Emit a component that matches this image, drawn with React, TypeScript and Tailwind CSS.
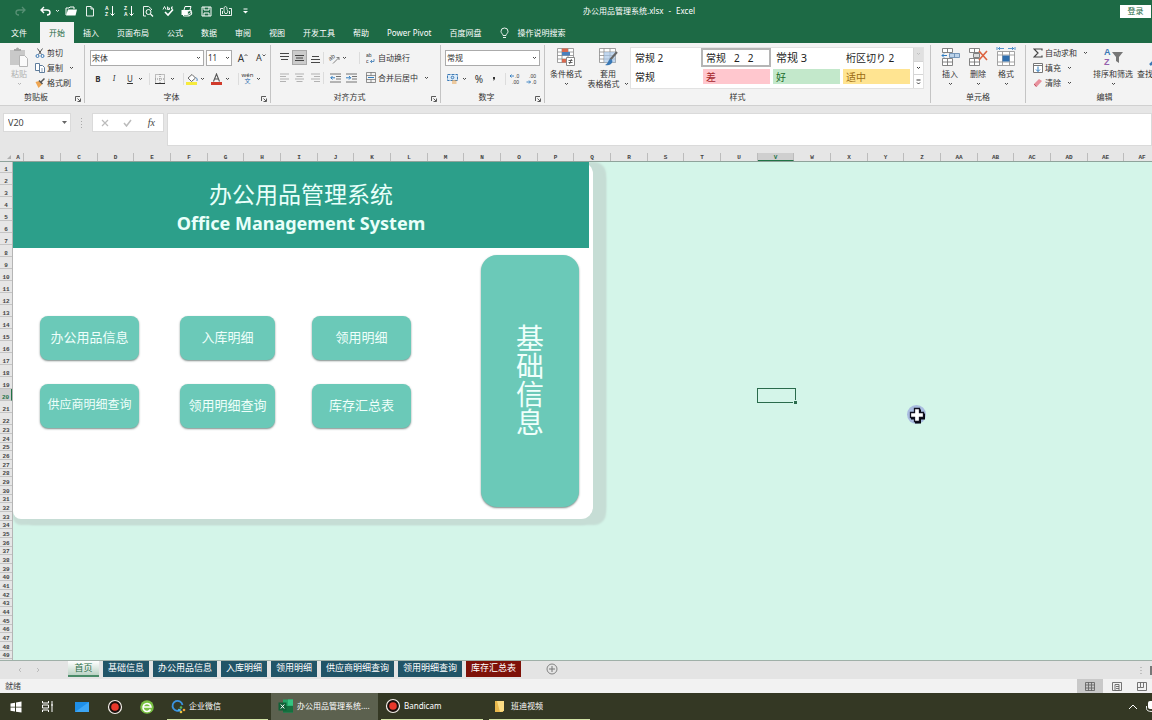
import type { ReactNode } from "react";

const SHEET_TABS = [
  "基础信息",
  "办公用品信息",
  "入库明细",
  "领用明细",
  "供应商明细查询",
  "领用明细查询",
];

const MENU_TABS = [
  "插入",
  "页面布局",
  "公式",
  "数据",
  "审阅",
  "视图",
  "开发工具",
  "帮助",
  "Power Pivot",
  "百度网盘",
];

const COLUMNS = [
  ..."BCDEFGHIJKLMNOPQRSTUVWXYZ".split(""),
  "AA",
  "AB",
  "AC",
  "AD",
  "AE",
  "AF",
];

const ROWS = Array.from({ length: 49 }, (_, i) => i + 1);

const rowHeight = (row: number) => {
  if (row === 1) return "h-[11px]";
  if (row <= 22) return "h-[12px]";
  return row % 3 === 1 ? "h-[8px]" : "h-[9px]";
};

type IconProps = {
  w?: number;
  h?: number;
  className?: string;
  children: ReactNode;
};

const Icon = ({ w = 12, h = 12, className = "", children }: IconProps) => (
  <svg
    width={w}
    height={h}
    viewBox={`0 0 ${w} ${h}`}
    fill="none"
    stroke="currentColor"
    className={`shrink-0 font-['Liberation_Sans',sans-serif] ${className}`}
    aria-hidden="true"
  >
    {children}
  </svg>
);

const Chevron = ({ className = "" }: { className?: string }) => (
  <Icon w={5} h={4} className={className}>
    <path d="M1 1l1.500 1.500L4 1" strokeWidth="0.9" />
  </Icon>
);

const Divider = () => <div className="h-3 w-px bg-[#dcdcdc]" />;

type ToolProps = { label: string; className: string; children: ReactNode };

const Tool = ({ label, className, children }: ToolProps) => (
  <button
    aria-label={label}
    className={`flex h-[15px] shrink-0 items-center justify-center ${className}`}
  >
    {children}
  </button>
);

type GroupProps = {
  title: string;
  className: string;
  launcher?: boolean;
  children: ReactNode;
};

const Group = ({ title, className, launcher, children }: GroupProps) => (
  <section
    className={`flex shrink-0 flex-col justify-between border-r border-[#c4c4c4] ${className}`}
  >
    <div className="flex h-[46px]">{children}</div>
    <div className="flex h-3 items-center">
      <span className="flex-1 text-center leading-3">{title}</span>
      {launcher && (
        <button aria-label={`${title}设置`} className="flex w-3 justify-center pt-1">
          <Icon w={6} h={6}>
            <path d="M0.500 5V0.500H5M2.500 2.500L5 5M5.500 2.500v3h-3" strokeWidth="0.8" />
          </Icon>
        </button>
      )}
    </div>
  </section>
);

const BigButton = ({
  icon,
  lines,
  className,
}: {
  icon: ReactNode;
  lines: string[];
  className: string;
}) => (
  <button
    className={`flex shrink-0 flex-col items-center whitespace-nowrap pt-[2px] ${className}`}
  >
    {icon}
    <span className="mt-[2px] leading-[10px]">{lines[0]}</span>
    <span className="flex h-[10px] items-center gap-1 leading-[10px]">
      {lines[1]}
      <Chevron />
    </span>
  </button>
);

const SmallButton = ({
  icon,
  label,
  arrow,
}: {
  icon: ReactNode;
  label: string;
  arrow?: boolean;
}) => (
  <button className="flex h-[15px] items-center gap-[2px] whitespace-nowrap">
    <span className="flex w-[10px] justify-center">{icon}</span>
    <span>{label}</span>
    {arrow && <Chevron className="ml-1" />}
  </button>
);

const Lines = ({ d }: { d: string }) => (
  <Icon w={9} h={12}>
    <path d={d} strokeWidth="0.9" />
  </Icon>
);

const TableGlyph = ({ children }: { children?: ReactNode }) => (
  <Icon w={20} h={20}>
    <path
      d="M1.500 1.500h16v14h-16zM1.500 5h16M1.500 8.500h16M1.500 12h16M6 1.500v14M12 1.500v14"
      stroke="#8a8a8a"
      strokeWidth="0.8"
      fill="#fff"
    />
    {children}
  </Icon>
);

const RecordGlyph = () => (
  <Icon w={16} h={16}>
    <circle cx="8" cy="8" r="6.500" fill="#1c0f0c" stroke="#f4f0ea" strokeWidth="1.200" />
    <circle cx="8" cy="8" r="3.800" fill="#e8382b" stroke="none" />
  </Icon>
);

const SortGlyph = ({ top, bottom }: { top: string; bottom: string }) => (
  <Icon>
    <text x="1" y="5" fontSize="5" fontWeight="700" fill="currentColor" stroke="none">{top}</text>
    <text x="1" y="11" fontSize="5" fontWeight="700" fill="currentColor" stroke="none">{bottom}</text>
    <path d="M8.500 1v9.500M6.500 8.500l2 2 2-2" />
  </Icon>
);

const TitleBar = () => (
  <header className="grid h-[22px] grid-cols-[1fr_auto_1fr] items-center">
    <div className="flex h-full items-center">
      <Tool label="重做" className="ml-3 w-4 opacity-25">
        <Icon w={12} h={10}>
          <path d="M8 1l3 3-3 3M11 4H5a3 2.500 0 0 0 0 5" strokeWidth="1.300" />
        </Icon>
      </Tool>
      <Tool label="撤消" className="ml-[11px] w-[22px] gap-[3px]">
        <Icon w={12} h={10}>
          <path d="M4 1L1 4l3 3M1 4h6a3 2.500 0 0 1 0 5" strokeWidth="1.400" />
        </Icon>
        <Chevron />
      </Tool>
      <div className="flex w-[194px]">
        <Tool label="打开" className="flex-1">
          <Icon>
            <path d="M1 10V3h3l1-1h4v2" />
            <path d="M1 10.500L3 4.500H12l-1.500 6z" fill="currentColor" stroke="none" />
          </Icon>
        </Tool>
        <Tool label="新建" className="flex-1">
          <Icon w={10}>
            <path d="M1.500 1.500h4.500l2.500 2.500v7h-7zM6 1.500V4h2.500" strokeWidth="0.9" />
          </Icon>
        </Tool>
        <Tool label="升序排序" className="flex-1">
          <SortGlyph top="A" bottom="Z" />
        </Tool>
        <Tool label="降序排序" className="flex-1">
          <SortGlyph top="Z" bottom="A" />
        </Tool>
        <Tool label="打印预览" className="flex-1">
          <Icon>
            <path d="M4 11H1.500V1.500h5l3 2.500v1" strokeWidth="0.9" />
            <circle cx="6.500" cy="7" r="2.500" />
            <path d="M8.500 9l2.500 2.500" strokeWidth="1.300" />
          </Icon>
        </Tool>
        <Tool label="拼写检查" className="flex-1">
          <Icon>
            <path d="M1 4.500L2.500 1.500 4 4.500M5.500 1.500v3h2v-1.500h-2M11 2H9.500v2H11" strokeWidth="0.9" />
            <path d="M3 7l3 3 5-5.500" strokeWidth="1.600" />
          </Icon>
        </Tool>
        <Tool label="快速打印" className="flex-1">
          <Icon>
            <path d="M0.500 5h10v5H0.500z" fill="currentColor" stroke="none" />
            <path d="M3 5l1-3.500h6L9 5M2.500 8h6v3h-6z" />
            <circle cx="8.500" cy="8" r="2.300" fill="#1d6a45" />
            <path d="M7.500 8l1 1 1.500-2" strokeWidth="0.8" />
          </Icon>
        </Tool>
        <Tool label="保存" className="flex-1">
          <Icon w={11} h={11}>
            <path d="M1 1h9v9H1zM3 1v3h5V1M3 10V7h5v3" />
          </Icon>
        </Tool>
        <Tool label="触摸/鼠标模式" className="flex-1">
          <Icon>
            <path d="M3 3.500H0.500v7h11v-7H9M2.500 6v3M9.500 6v3" strokeWidth="0.9" />
            <path d="M4 5V2.500l1.500-1 1.500 1v2l1 1.500-1 2.500H5L4 6z" strokeWidth="0.8" />
          </Icon>
        </Tool>
        <Tool label="自定义快速访问工具栏" className="flex-1">
          <Icon w={5} h={6}>
            <path d="M0.500 1h4" />
            <path d="M0 3h5L2.500 5.500z" fill="currentColor" stroke="none" />
          </Icon>
        </Tool>
      </div>
    </div>
    <h1 className="flex gap-[5px] pl-[126px] leading-4">
      <span>办公用品管理系统.xlsx</span>
      <span>-</span>
      <span>Excel</span>
    </h1>
    <button className="mr-px h-[13px] w-[31px] justify-self-end bg-white text-[#1d6a45]">
      登录
    </button>
  </header>
);

const MenuBar = () => (
  <nav className="flex h-[21px] items-stretch overflow-hidden whitespace-nowrap">
    <button className="w-10 pr-[2px]">文件</button>
    <button className="bg-[#f3f3f3] px-[9px] text-[#1d6a45]">开始</button>
    {MENU_TABS.map((tab) => (
      <button key={tab} className="px-[9px]">
        {tab}
      </button>
    ))}
    <button className="flex items-center gap-2 pl-[10px]">
      <Icon w={9} h={12}>
        <path d="M3 8.500c0-1.500-2-2.200-2-4.200a3.500 3.300 0 0 1 7 0c0 2-2 2.700-2 4.200zM3 10.500h3" strokeWidth="0.9" />
      </Icon>
      操作说明搜索
    </button>
  </nav>
);

const ClipboardGroup = () => (
  <Group title="剪贴板" className="w-[85px]" launcher>
    <div className="ml-[7px] mr-1 text-[#b0b0b0]">
      <BigButton
        className="w-6"
        lines={["粘贴"]}
        icon={
          <Icon w={20} h={20}>
            <path d="M1 3h15v15H1z" fill="#c9c9c9" stroke="none" />
            <path d="M5 4V2h2a1.500 1.500 0 0 1 3 0h2v2z" fill="#a8a8a8" stroke="none" />
            <path d="M10.500 8.500h5l3 3v8h-8z" fill="#fafafa" stroke="#b5b5b5" />
          </Icon>
        }
      />
    </div>
    <div className="flex flex-col">
      <SmallButton
        label="剪切"
        icon={
          <Icon w={10} h={10}>
            <path d="M2.500 0.500l4 6M7.500 0.500l-4 6" stroke="#555" />
            <circle cx="2.500" cy="8" r="1.500" stroke="#3a78b5" />
            <circle cx="7.500" cy="8" r="1.500" stroke="#3a78b5" />
          </Icon>
        }
      />
      <SmallButton
        arrow
        label="复制"
        icon={
          <Icon w={10} h={10}>
            <path d="M0.500 0.500h4v7h-4zM4.500 2.500h3l2 2v5h-5z" stroke="#5f7d9c" fill="#fff" />
            <path d="M6 6h2M6 8h2" stroke="#5f7d9c" strokeWidth="0.7" />
          </Icon>
        }
      />
      <SmallButton
        label="格式刷"
        icon={
          <Icon w={10} h={10}>
            <path d="M0.500 4L4 3l3 3.500-3.500 3.500z" fill="#efa652" stroke="none" />
            <path d="M4 2.500l3.500 3.500M6 4l3.500-3.500" stroke="#555" strokeWidth="1.500" />
          </Icon>
        }
      />
    </div>
  </Group>
);

const FontGroup = () => (
  <Group title="字体" className="w-[186px]" launcher>
    <div className="flex flex-col gap-[5px] pl-[5px] pt-[5px]">
      <div className="flex items-center">
        <label className="relative mr-[2px] flex items-center">
          <select aria-label="字体" className="h-4 w-[114px] appearance-none border border-[#ababab] bg-white pl-[1px]">
            <option>宋体</option>
          </select>
          <Chevron className="pointer-events-none absolute right-[3px]" />
        </label>
        <label className="relative flex items-center">
          <select aria-label="字号" className="h-4 w-[26px] appearance-none border border-[#ababab] bg-white pl-[1px]">
            <option>11</option>
          </select>
          <Chevron className="pointer-events-none absolute right-[2px]" />
        </label>
        <Tool label="增大字号" className="ml-[3px] w-4 text-[10px]">
          A<Icon w={4} h={10}><path d="M0.500 3L2 1.500 3.500 3" strokeWidth="0.8" /></Icon>
        </Tool>
        <Tool label="减小字号" className="ml-[2px] w-4 text-[9px]">
          A<Icon w={4} h={10}><path d="M0.500 1.500L2 3l1.500-1.500" strokeWidth="0.8" /></Icon>
        </Tool>
      </div>
      <div className="flex items-center">
        <Tool label="加粗" className="w-4 font-bold">B</Tool>
        <Tool label="倾斜" className="w-4 font-serif italic">I</Tool>
        <Tool label="下划线" className="w-4 underline">U</Tool>
        <Chevron className="mr-[6px]" />
        <Divider />
        <Tool label="边框" className="w-5">
          <Icon w={10} h={10}>
            <path d="M0.500 0.500h9v9h-9zM5 0v10M0 5h10" stroke="#888" strokeDasharray="1 1" />
            <path d="M0 9.500h10" />
          </Icon>
        </Tool>
        <Chevron className="mr-2" />
        <Divider />
        <Tool label="填充颜色" className="w-[15px]">
          <Icon w={12} h={12}>
            <path d="M2 5l4-3.500 3.500 3.500-4 3.500z" fill="#fff" stroke="#666" />
            <path d="M10 4.500c1.500 1.500 1.500 3 0.500 3.500" stroke="#3a78b5" />
            <path d="M0 9h11v3H0z" fill="#f6ea3c" stroke="none" />
          </Icon>
        </Tool>
        <Chevron className="ml-[1px] mr-1" />
        <Tool label="字体颜色" className="w-4">
          <Icon w={12} h={12}>
            <path d="M2.500 8.500L5.500 1l3 7.500M3.700 6h3.600" stroke="#555" strokeWidth="1.100" />
            <path d="M0 9h11v3H0z" fill="#d13a2a" stroke="none" />
          </Icon>
        </Tool>
        <Chevron className="mr-2" />
        <Divider />
        <Tool label="显示拼音" className="w-[17px] flex-col text-[6px]">
          <span className="leading-[6px]">wén</span>
          <span className="leading-[7px] text-[#2a6bb0]">文</span>
        </Tool>
        <Chevron />
      </div>
    </div>
  </Group>
);

const AlignGroup = () => (
  <Group title="对齐方式" className="w-[170px]" launcher>
    <div className="flex flex-col gap-[5px] pl-[5px] pt-[5px]">
      <div className="flex items-center">
        <Tool label="顶端对齐" className="w-4">
          <Lines d="M0 1.500h9M0 4.500h9M1 7.500h7" />
        </Tool>
        <Tool label="垂直居中" className="w-[15px] border border-[#a8a8a8] bg-[#cbcbcb]">
          <Lines d="M0 3.500h9M1 6h7M0 8.500h9" />
        </Tool>
        <Tool label="底端对齐" className="w-4">
          <Lines d="M1 4.500h7M0 7.500h9M0 10.500h9" />
        </Tool>
        <Divider />
        <Tool label="方向" className="ml-[4px] w-[14px]">
          <Icon w={14} h={12}>
            <text x="2" y="9" fontSize="6" fill="#444" stroke="none" transform="rotate(-35 2 9)">ab</text>
            <path d="M5 11.500l6-6M11 8V5.500H8.500" stroke="#666" strokeWidth="0.8" />
          </Icon>
        </Tool>
        <Chevron className="mr-[12px]" />
        <Divider />
        <button className="ml-[6px] flex items-center gap-[3px]">
          <Icon w={9} h={12}>
            <text x="0" y="5" fontSize="5" fill="#333" stroke="none">ab</text>
            <text x="0" y="11" fontSize="5" fill="#333" stroke="none">c</text>
            <path d="M8 7v2.500H4.500M6 8L4.500 9.500 6 11" stroke="#3a78b5" strokeWidth="0.8" />
          </Icon>
          自动换行
        </button>
      </div>
      <div className="flex items-center">
        <Tool label="左对齐" className="w-4 text-[#aaa]">
          <Lines d="M0 2h9M0 4.500h6M0 7h9M0 9.500h6" />
        </Tool>
        <Tool label="居中" className="w-[15px] text-[#aaa]">
          <Lines d="M0 2h9M1.500 4.500h6M0 7h9M1.500 9.500h6" />
        </Tool>
        <Tool label="右对齐" className="w-4 text-[#aaa]">
          <Lines d="M0 2h9M3 4.500h6M0 7h9M3 9.500h6" />
        </Tool>
        <Divider />
        <Tool label="减少缩进量" className="ml-[3px] w-4">
          <Icon w={11} h={10}>
            <path d="M0 1h11M6 3.500h5M6 6h5M0 9h11" stroke="#666" strokeWidth="0.9" />
            <path d="M5 4.800H0.800M2.500 3L0.800 4.800l1.700 1.700" stroke="#2f7cc0" />
          </Icon>
        </Tool>
        <Tool label="增加缩进量" className="w-4">
          <Icon w={11} h={10}>
            <path d="M0 1h11M6 3.500h5M6 6h5M0 9h11" stroke="#666" strokeWidth="0.9" />
            <path d="M0 4.800h4.500M3 3l1.700 1.800L3 6.500" stroke="#2f7cc0" />
          </Icon>
        </Tool>
        <div className="w-[7px]" />
        <button className="flex items-center gap-[2px]">
          <Icon w={10} h={11}>
            <path d="M0.500 0.500h9v10h-9zM0 3.500h10M0 7.500h10M5 0v3.500M5 7.500V11" stroke="#777" strokeWidth="0.8" />
            <path d="M2 5.500h6" stroke="#2f7cc0" />
          </Icon>
          合并后居中
          <Chevron className="ml-1" />
        </button>
      </div>
    </div>
  </Group>
);

const NumberGroup = () => (
  <Group title="数字" className="w-[104px]" launcher>
    <div className="flex flex-1 flex-col gap-[5px] pl-1 pr-[5px] pt-[5px]">
      <label className="relative flex items-center">
        <select aria-label="数字格式" className="h-4 w-full appearance-none border border-[#ababab] bg-white pl-[1px]">
          <option>常规</option>
        </select>
        <Chevron className="pointer-events-none absolute right-[3px]" />
      </label>
      <div className="flex items-center">
        <Tool label="会计数字格式" className="ml-[1px] w-[14px]">
          <Icon w={12} h={10}>
            <path d="M0.500 0.500h10v6h-10z" fill="#dcebf8" stroke="#3a78b5" strokeDasharray="3 1" />
            <circle cx="5.500" cy="3.500" r="1.300" stroke="#3a78b5" />
            <path d="M5 7h4.500M5 9h4.500" stroke="#e9a14b" strokeWidth="1.200" />
          </Icon>
        </Tool>
        <Chevron className="ml-[2px] mr-1" />
        <Tool label="百分比样式" className="w-4 text-[10px]">%</Tool>
        <Tool label="千位分隔样式" className="w-[14px]">
          <Icon w={4} h={6}>
            <path d="M1 1h2v2L1.500 5V3H1z" fill="currentColor" stroke="none" />
          </Icon>
        </Tool>
        <div className="ml-1">
          <Divider />
        </div>
        <Tool label="增加小数位数" className="w-[17px]">
          <Icon w={11} h={12}>
            <path d="M5 3H1M2.500 1.500L1 3l1.500 1.500" stroke="#2f7cc0" strokeWidth="0.9" />
            <text x="6" y="5" fontSize="5" fill="#333" stroke="none">.0</text>
            <text x="3" y="11" fontSize="5" fill="#333" stroke="none">.00</text>
          </Icon>
        </Tool>
        <Tool label="减少小数位数" className="w-[17px]">
          <Icon w={11} h={12}>
            <text x="3" y="5" fontSize="5" fill="#333" stroke="none">.00</text>
            <path d="M0.500 9h4M3 7.500L4.500 9 3 10.500" stroke="#2f7cc0" strokeWidth="0.9" />
            <text x="6" y="11" fontSize="5" fill="#333" stroke="none">.0</text>
          </Icon>
        </Tool>
      </div>
    </div>
  </Group>
);

const StyleGroup = () => (
  <Group title="样式" className="w-[386px]">
    <div className="flex">
      <BigButton
        className="w-[42px]"
        lines={["条件格式"]}
        icon={
          <TableGlyph>
            <path d="M6 1.500h6v3.500H6zM6 12h4v3.500H6z" fill="#d9694f" stroke="none" />
            <path d="M6 5h8v3.500H6z" fill="#4a80bd" stroke="none" />
            <path d="M10.500 10.500h8v8h-8z" fill="#fff" stroke="#888" />
            <path d="M12.500 13.500h4M12.500 15.500h4M15.500 12l-2 5" stroke="#444" strokeWidth="0.8" />
          </TableGlyph>
        }
      />
      <BigButton
        className="w-[42px]"
        lines={["套用", "表格格式"]}
        icon={
          <TableGlyph>
            <path d="M6 5h11.500v10.500H6z" fill="#a9c8e8" fillOpacity="0.7" stroke="none" />
            <path d="M19 5l-7 8" stroke="#666" strokeWidth="2" />
            <path d="M13 12c-3 0-2 4-6 6 3 1 7 0 7.500-4z" fill="#3a78b5" stroke="none" />
          </TableGlyph>
        }
      />
    </div>
    <div className="ml-px mt-[2px] flex h-[42px] border border-[#e2e2e2] bg-white text-[10px] text-[#222]">
      <div className="grid grid-cols-4 grid-rows-2 gap-y-[2px] text-left">
        <button className="w-[70px] whitespace-nowrap pl-1 text-left">常规 2</button>
        <button className="flex w-[70px] items-center gap-2 whitespace-nowrap border-2 border-[#b5b5b5] pl-[3px]">
          <span>常规</span>
          <span>2</span>
          <span>2</span>
        </button>
        <button className="w-[70px] whitespace-nowrap pl-[5px] text-left text-[11px]">常规 3</button>
        <button className="w-[70px] whitespace-nowrap pl-[5px] text-left">桁区切り 2</button>
        <button className="mb-1 w-[70px] pl-1 text-left">常规</button>
        <button className="mb-1 ml-[2px] w-[67px] bg-[#ffc7ce] pl-[3px] text-left text-[#a5262d]">差</button>
        <button className="mb-1 ml-[2px] w-[67px] bg-[#c3e8cb] pl-[3px] text-left text-[#1d6b2a]">好</button>
        <button className="mb-1 ml-[2px] w-[67px] bg-[#ffe491] pl-[3px] text-left text-[#9a6a12]">适中</button>
      </div>
      <div className="ml-[2px] flex w-[10px] flex-col border-l border-[#d5d5d5]">
        <button aria-label="上一行" className="flex flex-1 items-center justify-center bg-[#e0e0e0] text-[#bbb]">
          <Chevron />
        </button>
        <button aria-label="下一行" className="flex flex-1 items-center justify-center border-t border-[#d5d5d5]">
          <Chevron />
        </button>
        <button aria-label="其他" className="flex flex-1 items-center justify-center border-t border-[#d5d5d5]">
          <Icon w={5} h={6}>
            <path d="M0.500 1h4M1 3.500L2.500 5 4 3.500" strokeWidth="0.9" />
          </Icon>
        </button>
      </div>
    </div>
  </Group>
);

const CellGroup = () => (
  <Group title="单元格" className="w-[95px]">
    <div className="flex pl-[5px]">
      <BigButton
        className="w-7"
        lines={["插入"]}
        icon={
          <Icon w={20} h={20}>
            <path d="M2.500 1.500h10v4h-10zM2.500 11.500h10v7h-10zM7.500 1.500v4M7.500 11.500v7M2.500 15h10" fill="#fff" stroke="#777" strokeWidth="0.9" />
            <path d="M9.500 6.500h10v4h-10zM14.500 6.500v4" fill="#bcd3ea" stroke="#6b8fb3" strokeWidth="0.9" />
            <path d="M7 8.500H2M4 6.500l-2 2 2 2" stroke="#2f7cc0" />
          </Icon>
        }
      />
      <BigButton
        className="w-7"
        lines={["删除"]}
        icon={
          <Icon w={20} h={20}>
            <path d="M1.500 1.500h10v4h-10zM1.500 11.500h10v7h-10zM6.500 1.500v4M6.500 11.500v7M1.500 15h10" fill="#fff" stroke="#777" strokeWidth="0.9" />
            <path d="M5.500 6.500h6v4h-6z" fill="#ddd" stroke="#777" strokeWidth="0.9" />
            <path d="M11 4l8 9M19 4l-8 9" stroke="#dd6440" strokeWidth="1.600" />
          </Icon>
        }
      />
      <BigButton
        className="w-7"
        lines={["格式"]}
        icon={
          <Icon w={20} h={20}>
            <path d="M1.500 4.500h17v14h-17zM1.500 8h17M1.500 15h17M6.500 4.500v14M13.500 4.500v14" fill="#fff" stroke="#999" strokeWidth="0.9" />
            <path d="M6.500 8.500h7v6h-7z" fill="#2f6fae" stroke="none" />
            <path d="M1 0v3M19 0v3M2 1.500h6M12 1.500h6M4 0L2.500 1.500 4 3M16 0l1.500 1.500L16 3" stroke="#2f7cc0" strokeWidth="0.8" />
          </Icon>
        }
      />
    </div>
  </Group>
);

const EditGroup = () => (
  <Group title="编辑" className="w-[158px]">
    <div className="flex w-[62px] flex-col pl-[7px]">
      <SmallButton
        arrow
        label="自动求和"
        icon={
          <Icon w={10} h={10}>
            <path d="M9 2.500V1H1l4 4-4 4h8V7.500" stroke="#444" strokeWidth="1.200" />
          </Icon>
        }
      />
      <SmallButton
        arrow
        label="填充"
        icon={
          <Icon w={10} h={10}>
            <path d="M0.500 0.500h9v9h-9zM0.500 2.500h9" fill="#fff" stroke="#777" />
            <path d="M5 3.500v5M3 6.500l2 2 2-2" stroke="#2f7cc0" />
          </Icon>
        }
      />
      <SmallButton
        arrow
        label="清除"
        icon={
          <Icon w={10} h={10}>
            <path d="M1 6l5-5 3 2-5 5.500H2z" fill="#e8909c" stroke="none" />
            <path d="M1 6l2.500 2.500" stroke="#c05a68" />
          </Icon>
        }
      />
    </div>
    <BigButton
      className="w-[50px]"
      lines={["排序和筛选"]}
      icon={
        <Icon w={20} h={20}>
          <text x="1" y="8" fontSize="9" fontWeight="700" fill="#3a78b5" stroke="none">A</text>
          <text x="1" y="18" fontSize="9" fontWeight="700" fill="#9560ad" stroke="none">Z</text>
          <path d="M9 5h11l-4 5v6l-3-2v-4z" fill="#777" stroke="none" />
        </Icon>
      }
    />
    <BigButton
      className="w-[38px]"
      lines={["查找和选择"]}
      icon={
        <Icon w={20} h={20}>
          <circle cx="13" cy="7" r="4.500" stroke="#3a78b5" strokeWidth="1.500" />
          <path d="M10 11l-7 7" stroke="#3a78b5" strokeWidth="2.500" />
        </Icon>
      }
    />
  </Group>
);

const FormulaBar = () => (
  <div className="flex h-12 items-start border-t border-[#d0d0d0] bg-[#e6e6e6] pl-[3px] pt-[7px] text-[#444]">
    <label className="relative flex items-center">
      <input aria-label="名称框" defaultValue="V20" className="h-[19px] w-[68px] border border-[#dadada] bg-white pl-1 text-[9px]" />
      <Icon w={5} h={3} className="absolute right-1">
        <path d="M0 0h5L2.500 3z" fill="#666" stroke="none" />
      </Icon>
    </label>
    <Icon w={21} h={19} className="text-[#aaa]">
      <path d="M10.500 5v10" strokeDasharray="1 2" />
    </Icon>
    <div className="mr-[3px] flex h-[19px] w-[72px] items-center border border-[#dadada] bg-white">
      <Tool label="取消" className="flex-1 text-[#bbb]">
        <Icon w={8} h={8}><path d="M1 1l6 6M7 1L1 7" strokeWidth="1.200" /></Icon>
      </Tool>
      <Tool label="输入" className="flex-1 text-[#bbb]">
        <Icon w={9} h={8}><path d="M1 4l2.500 3L8 1" strokeWidth="1.500" /></Icon>
      </Tool>
      <Tool label="插入函数" className="flex-1 font-['Liberation_Serif',serif] text-[10px] italic">fx</Tool>
    </div>
    <textarea aria-label="编辑栏" className="h-[33px] min-w-0 flex-1 resize-none border border-[#dadada] bg-white" />
  </div>
);

const ColumnHeader = () => (
  <div className="flex h-[9px] overflow-hidden border-b border-[#8fa39b] bg-[#e6e6e6] text-center font-['Liberation_Mono',monospace] text-[6px] font-bold leading-[9px] text-[#444]">
    <div className="flex w-[13px] shrink-0 justify-end p-[2px]">
      <Icon w={4} h={4}><path d="M4 0v4H0z" fill="#b0b0b0" stroke="none" /></Icon>
    </div>
    <div className="w-[11px] shrink-0 border-r border-[#bcbcbc]">A</div>
    {COLUMNS.map((name, i) => (
      <div
        key={name}
        className={`shrink-0 border-r border-[#bcbcbc] ${i % 3 === 2 ? "w-[36px]" : "w-[37px]"} ${
          name === "V" ? "border-b border-b-[#217346] bg-[#cfcfcf] text-[#217346]" : ""
        }`}
      >
        {name}
      </div>
    ))}
  </div>
);

const RowHeader = () => (
  <div className="w-[13px] shrink-0 border-r border-[#b5b5b5] bg-[#e6e6e6] text-center font-['Liberation_Mono',monospace] text-[6px] font-bold text-[#444]">
    {ROWS.map((row) => (
      <div
        key={row}
        className={`flex items-end justify-center border-b border-[#c4c4c4] leading-[5px] ${rowHeight(row)} ${
          row === 20 ? "border-r border-r-[#217346] bg-[#cfcfcf] text-[#217346]" : ""
        }`}
      >
        {row}
      </div>
    ))}
  </div>
);

const LinkButton = ({ label, className }: { label: string; className: string }) => (
  <button
    className={`h-11 whitespace-nowrap rounded-lg bg-[#6bc9b8] pb-[2px] text-[#effffb] shadow-[0_1px_2px_rgba(70,90,85,0.7)] ${className}`}
  >
    {label}
  </button>
);

const Dashboard = () => (
  <div className="h-[357px] w-[580px] rounded-r-xl rounded-bl-lg bg-white shadow-[13px_6px_2px_#c6ddd5,13px_0_2px_#c6ddd5,0_6px_2px_#c6ddd5]">
    <div className="mr-1 flex h-[86px] flex-col items-center bg-[#2c9f8a] pt-[17px] text-[#e9fffa]">
      <h2 className="text-[23px] leading-[30px]">办公用品管理系统</h2>
      <p className="text-[18px] font-bold leading-[28px]">Office Management System</p>
    </div>
    <div className="flex justify-between pl-[27px] pr-[14px] pt-[7px]">
      <div className="mt-[61px] grid grid-cols-[140px_132px_99px] content-start gap-y-6 text-[13px]">
        <LinkButton label="办公用品信息" className="w-[99px]" />
        <LinkButton label="入库明细" className="w-[95px]" />
        <LinkButton label="领用明细" className="w-[99px]" />
        <LinkButton label="供应商明细查询" className="w-[99px] text-[12px]" />
        <LinkButton label="领用明细查询" className="w-[95px]" />
        <LinkButton label="库存汇总表" className="w-[99px]" />
      </div>
      <button className="flex h-[252px] w-[98px] items-center justify-center rounded-2xl bg-[#6bc9b8] pb-[2px] text-[28px] leading-[28px] text-[#effffb] shadow-[0_1px_2px_rgba(70,90,85,0.7)]">
        <span className="w-7 break-all">基础信息</span>
      </button>
    </div>
  </div>
);

const Sheet = () => (
  <main className="flex flex-1 overflow-hidden">
    <RowHeader />
    <div className="relative flex-1 overflow-hidden bg-[#d4f5e9]">
      <Dashboard />
      <div className="absolute left-[744px] top-[226px] h-[15px] w-[39px] border border-[#2a6b4c]">
        <div className="absolute -bottom-[2px] -right-[2px] h-1 w-1 border-l border-t border-[#d4f5e9] bg-[#2a6b4c]" />
      </div>
      <Icon w={20} h={20} className="absolute left-[894px] top-[243px]">
        <circle cx="9.500" cy="9.500" r="9.500" fill="#a9bce0" stroke="none" />
        <path d="M8 4.500h6v4h4v6h-4v4H8v-4H4v-6h4z" fill="#05060f" stroke="none" />
        <path d="M7.500 3.500h5v4h4v5h-4v4h-5v-4h-4v-5h4z" fill="#fff" stroke="#101020" strokeWidth="1.300" />
      </Icon>
    </div>
  </main>
);

const SheetTabs = () => (
  <div className="flex h-[19px] items-start border-t border-[#9fb0a8] bg-[#e4e4e4] text-[9px]">
    <div className="flex h-full w-[68px] items-center gap-[14px] pl-[18px] text-[#bbb]">
      <Icon w={4} h={6}><path d="M3 1L1 3l2 2" /></Icon>
      <Icon w={4} h={6}><path d="M1 1l2 2-2 2" /></Icon>
    </div>
    <div className="flex gap-1 whitespace-nowrap">
      <button className="h-4 w-[31px] border-b-2 border-[#4a8b68] bg-linear-to-b from-white to-[#bcd3c5] text-[#2c6e49]">
        首页
      </button>
      {SHEET_TABS.map((tab) => (
        <button key={tab} className="h-4 bg-[#215467] px-[5px] pb-[2px] text-white">
          {tab}
        </button>
      ))}
      <button className="h-4 bg-[#7e1108] px-[5px] pb-[2px] text-white">库存汇总表</button>
    </div>
    <button aria-label="新工作表" className="ml-[25px] mt-[2px] text-[#777]">
      <Icon w={12} h={12}>
        <circle cx="6" cy="6" r="5" strokeWidth="0.9" />
        <path d="M6 3v6M3 6h6" />
      </Icon>
    </button>
    <div className="ml-auto flex h-full items-center gap-2 text-[#999]">
      <Icon w={2} h={9}><path d="M1 1v8" strokeDasharray="1 2" /></Icon>
      <div className="h-[9px] w-[2px] bg-[#777]" />
    </div>
  </div>
);

const StatusBar = () => (
  <div className="flex h-[14px] items-center bg-[#f2f2f2] pl-[5px] text-[#444]">
    <span>就绪</span>
    <div className="ml-auto flex h-full text-[#666]">
      <Tool label="普通" className="w-[26px] bg-[#c9c9c9]">
        <Icon w={10} h={9}><path d="M0.500 0.500h9v8h-9zM0 3h10M0 6h10M3.500 0v9M6.500 0v9" strokeWidth="0.9" /></Icon>
      </Tool>
      <Tool label="页面布局" className="w-7">
        <Icon w={10} h={9}><path d="M0.500 0.500h9v8h-9zM3 2.500h4v6H3zM4 4.500h3M4 6.500h3" strokeWidth="0.9" /></Icon>
      </Tool>
      <Tool label="分页预览" className="w-[21px]">
        <Icon w={10} h={9}><path d="M0.500 0.500h9v8h-9zM3.500 0.500v5h-3M6.500 0.500v5h-3" strokeWidth="0.9" /></Icon>
      </Tool>
    </div>
  </div>
);

const TaskApp = ({
  icon,
  label,
  className,
}: {
  icon: ReactNode;
  label: string;
  className: string;
}) => (
  <button className={`flex h-full items-center whitespace-nowrap border-b ${className}`}>
    {icon}
    {label}
  </button>
);

const Taskbar = () => (
  <footer className="flex h-[27px] items-center bg-[#343824] text-white">
    <button aria-label="开始菜单" className="flex w-8 justify-center">
      <Icon w={12} h={12}>
        <path d="M0.500 2.500l4.500-.8v4H.5zM6 1.500l5.500-1v5.200H6zM.5 6.500H5v4l-4.500-.8zM6 6.500h5.500v5L6 10.700z" fill="currentColor" stroke="none" />
      </Icon>
    </button>
    <button aria-label="任务视图" className="flex w-8 justify-center">
      <Icon w={12} h={11}>
        <path d="M0.500 0v2h6V0M0.500 11V9h6v2M0.500 4h6v3h-6zM10 0v11M9 4h2" />
      </Icon>
    </button>
    <button aria-label="桌面" className="flex w-9 justify-center">
      <Icon w={14} h={12}>
        <path d="M0 1h14v10H0z" fill="#1e8fe8" stroke="none" />
        <path d="M0 11L14 1v10z" fill="#3da6f5" stroke="none" />
      </Icon>
    </button>
    <button aria-label="录制" className="flex w-[30px] justify-center">
      <RecordGlyph />
    </button>
    <button aria-label="浏览器" className="flex w-[34px] justify-center">
      <Icon w={14} h={14}>
        <circle cx="7" cy="7" r="6.800" fill="#79c143" stroke="none" />
        <path d="M10.500 9.500A4 4 0 1 1 11 7H4" stroke="#fff" strokeWidth="1.600" />
      </Icon>
    </button>
    <TaskApp
      className="ml-[3px] w-[101px] gap-[3px] border-[#d3e3a6] pl-[3px]"
      label="企业微信"
      icon={
        <Icon w={16} h={15}>
          <path d="M11 10.500A5 5 0 1 1 12.500 6" stroke="#3c93e0" strokeWidth="1.800" />
          <circle cx="11" cy="8.500" r="1.300" fill="#5cb85c" stroke="none" />
          <circle cx="14" cy="11" r="1.300" fill="#f2a33a" stroke="none" />
          <circle cx="11" cy="13" r="1.300" fill="#e9c33d" stroke="none" />
          <circle cx="9" cy="11" r="1.300" fill="#4ab0e8" stroke="none" />
        </Icon>
      }
    />
    <TaskApp
      className="ml-[3px] w-[107px] gap-[3px] border-[#5c614f] bg-[#5c614f] pl-[7px]"
      label="办公用品管理系统...."
      icon={
        <Icon w={16} h={14}>
          <path d="M5 0.500h10v13H5z" fill="#23a566" stroke="none" />
          <path d="M10 0.500h5v6h-5z" fill="#34c481" stroke="none" />
          <path d="M5 7h10v6.500H5z" fill="#15703f" stroke="none" />
          <path d="M0.500 3.500h8v8h-8z" fill="#0f6136" stroke="none" />
          <path d="M2.800 5.500l3.500 4M6.300 5.500l-3.500 4" stroke="#fff" />
        </Icon>
      }
    />
    <TaskApp
      className="ml-[3px] w-[102px] gap-[3px] border-[#d3e3a6] pl-1"
      label="Bandicam"
      icon={<RecordGlyph />}
    />
    <TaskApp
      className="ml-[6px] w-[101px] gap-[6px] border-[#d3e3a6] pl-[5px]"
      label="班迪视频"
      icon={
        <Icon w={11} h={13}>
          <path d="M1 1h8v11H1z" fill="#e8b84d" stroke="none" />
          <path d="M3 1h7v10l-4 1z" fill="#fbdc84" stroke="none" />
        </Icon>
      }
    />
    <div className="ml-auto flex items-center gap-2">
      <Icon w={10} h={6}><path d="M1 5l4-4 4 4" /></Icon>
      <Icon w={6} h={12}>
        <rect x="2" y="0" width="6" height="8" rx="2" fill="currentColor" stroke="none" />
        <path d="M0.500 5v2.500c0 2 2 3 5.500 3" strokeWidth="0.9" />
      </Icon>
    </div>
  </footer>
);

const App = () => {
  return (
    <div className="flex min-h-screen flex-col overflow-hidden font-['Noto_Sans','Noto_Sans_CJK_SC',sans-serif] text-[8px] leading-[10px]">
      <div className="bg-[#1d6a45] text-white">
        <TitleBar />
        <MenuBar />
      </div>
      <div className="flex h-[62px] overflow-hidden bg-[#f3f3f3] py-[2px] text-[#333]">
        <ClipboardGroup />
        <FontGroup />
        <AlignGroup />
        <NumberGroup />
        <StyleGroup />
        <CellGroup />
        <EditGroup />
      </div>
      <FormulaBar />
      <ColumnHeader />
      <Sheet />
      <SheetTabs />
      <StatusBar />
      <Taskbar />
    </div>
  );
};

export default App;
